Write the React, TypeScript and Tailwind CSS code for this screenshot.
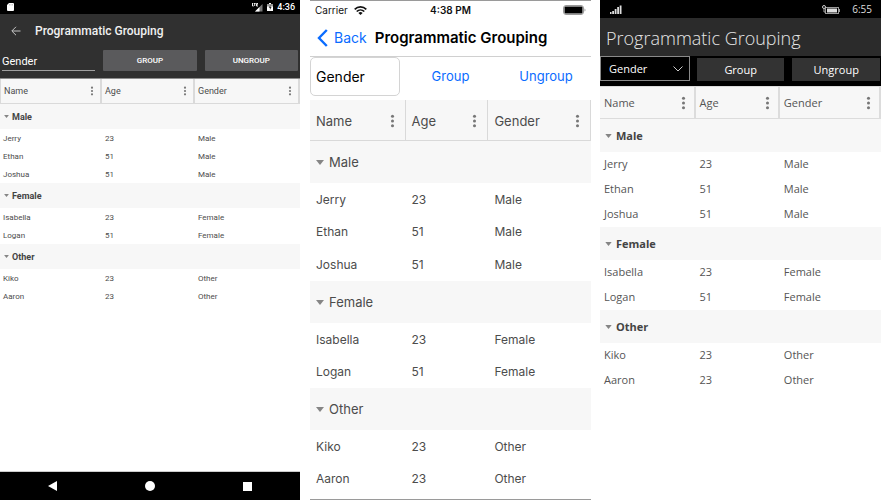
import React from "react";

type Person = { name: string; age: number };
type Group = { label: string; people: Person[] };

const groups: Group[] = [
  {
    label: "Male",
    people: [
      { name: "Jerry", age: 23 },
      { name: "Ethan", age: 51 },
      { name: "Joshua", age: 51 },
    ],
  },
  {
    label: "Female",
    people: [
      { name: "Isabella", age: 23 },
      { name: "Logan", age: 51 },
    ],
  },
  {
    label: "Other",
    people: [
      { name: "Kiko", age: 23 },
      { name: "Aaron", age: 23 },
    ],
  },
];

const columns = ["Name", "Age", "Gender"];

type GridTheme = {
  table: string;
  widths: [string, string, string];
  headRow: string;
  headCell: string;
  dots: string;
  groupRow: string;
  groupButton: string;
  arrow: string;
  row: string;
  cell: string;
};

function Dots({ className }: { className: string }) {
  return (
    <svg viewBox="0 0 4 12" className={className} fill="currentColor" aria-hidden="true">
      <circle cx="2" cy="2" r="1.3" />
      <circle cx="2" cy="6" r="1.3" />
      <circle cx="2" cy="10" r="1.3" />
    </svg>
  );
}

function DataGrid({ theme }: { theme: GridTheme }) {
  return (
    <table className={`w-full table-fixed border-separate border-spacing-0 text-left ${theme.table}`}>
      <colgroup>
        {theme.widths.map((w, i) => (
          <col key={i} className={w} />
        ))}
      </colgroup>
      <thead>
        <tr className={theme.headRow}>
          {columns.map((c) => (
            <th key={c} scope="col" className={`p-0 font-normal ${theme.headCell}`}>
              <div className="flex items-center justify-between">
                <span>{c}</span>
                <button type="button" aria-label={`${c} options`} className="flex text-[#777]">
                  <Dots className={theme.dots} />
                </button>
              </div>
            </th>
          ))}
        </tr>
      </thead>
      {groups.map((g) => (
        <tbody key={g.label}>
          <tr className={`bg-[#f7f7f7] ${theme.groupRow}`}>
            <th colSpan={3} scope="rowgroup" className="p-0">
              <button type="button" className={`flex items-center ${theme.groupButton}`}>
                <svg viewBox="0 0 8 5" className={theme.arrow} fill="#858585" aria-hidden="true">
                  <path d="M0 0h8L4 5z" />
                </svg>
                {g.label}
              </button>
            </th>
          </tr>
          {g.people.map((p) => (
            <tr key={p.name} className={theme.row}>
              <td className={theme.cell}>{p.name}</td>
              <td className={theme.cell}>{p.age}</td>
              <td className={theme.cell}>{g.label}</td>
            </tr>
          ))}
        </tbody>
      ))}
    </table>
  );
}

const androidGrid: GridTheme = {
  table: "border-t border-[#8c8c8c] text-[8px] leading-[10px] text-[#4c4c4c]",
  widths: ["w-[34%]", "w-[31%]", "w-[35%]"],
  headRow: "h-[25px] bg-[#f7f7f7]",
  headCell: "border-b border-r-2 border-[#dadada] pl-[3px] pr-1.5 text-[9px] first:border-l",
  dots: "h-[10px] w-1",
  groupRow: "h-[25px]",
  groupButton: "gap-[3px] pl-1 text-[9px] font-bold text-[#444]",
  arrow: "h-[3px] w-[5px]",
  row: "h-[18px]",
  cell: "pb-0 pt-px pl-[3px] pr-0",
};

const iosGrid: GridTheme = {
  table: "text-[13px] leading-4 text-[#4c4c4c]",
  widths: ["w-[34%]", "w-[29.5%]", "w-[36.5%]"],
  headRow: "h-[41px] bg-[#f7f7f7]",
  headCell: "border-b border-r border-[#d9d9d9] pl-1.5 pr-2.5 pt-px",
  dots: "h-[14px] w-[5px]",
  groupRow: "h-[42px]",
  groupButton: "gap-[5px] pl-1.5 font-normal",
  arrow: "h-[5px] w-2",
  row: "even:h-[33px] odd:h-8",
  cell: "py-0 pl-1.5 pr-0 text-[12px]",
};

const windowsGrid: GridTheme = {
  table: "text-[11px] leading-[14px] text-[#555]",
  widths: ["w-[34%]", "w-[30%]", "w-[36%]"],
  headRow: "h-[33px] bg-[#f7f7f7]",
  headCell: "border-y border-r-2 border-[#dcdcdc] pl-1 pr-2",
  dots: "h-[14px] w-[5px]",
  groupRow: "h-[33px]",
  groupButton: "gap-1 pl-[5px] font-bold text-[#444]",
  arrow: "h-[4px] w-[7px]",
  row: "h-[25px]",
  cell: "pb-px pt-0 pl-1 pr-0",
};

function AndroidScreen() {
  return (
    <section className="flex flex-col bg-white font-['Roboto',sans-serif]">
      <div className="flex h-3.5 items-center justify-end gap-1 bg-black pl-[7px] pr-[5px] text-[9px] font-medium leading-3 text-white">
        <svg viewBox="0 0 7 8" className="mr-auto h-2 w-[7px]" aria-hidden="true">
          <path d="M2 0h4a1 1 0 0 1 1 1v6a1 1 0 0 1-1 1H1a1 1 0 0 1-1-1V2z" fill="#fff" />
          <path d="M2.5 1v1.500M4 1v1.500M5.500 1v1.500" stroke="#999" strokeWidth=".5" />
        </svg>
        <svg viewBox="0 0 11 9" className="h-[9px] w-[11px]" aria-hidden="true">
          <path d="M10.500 1v7.500H3z" fill="#777" />
          <path d="M7.500 4v4.500H3z" fill="#fff" />
          <path d="M.5 0v3h1.200M1.700.5h2M2.700.5v2.500M6 .5H4.500v2.500H6M4.500 1.700h1.300" stroke="#fff" strokeWidth=".9" fill="none" />
        </svg>
        <svg viewBox="0 0 6 8" className="h-2 w-1.5" aria-hidden="true">
          <path d="M2 0h2v1h2v7H0V1h2z" fill="#fff" />
          <path d="M0 1h6v2.500H0z" fill="#999" />
          <path d="M3.400 2 1.700 4.800h1.200V7l1.600-2.900H3.400z" fill="#222" />
        </svg>
        <span>4:36</span>
      </div>
      <header className="flex h-[34px] items-center gap-3.5 bg-[#303030] pl-[11px] text-[#f0f0f0]">
        <button type="button" aria-label="Back" className="flex">
          <svg viewBox="0 0 10 10" className="size-2.5" fill="none" stroke="#c4c4c4" aria-hidden="true">
            <path d="M9.500 5H1M5 .8.800 5 5 9.200" />
          </svg>
        </button>
        <h1 className="text-[12px] font-medium leading-4">Programmatic Grouping</h1>
      </header>
      <div className="flex h-[30px] gap-2 bg-[#303030] px-0.5 pt-0.5 text-white">
        <select
          aria-label="Column"
          className="mb-[7px] min-w-0 flex-1 appearance-none border-b border-[#a0a0a0] bg-transparent pt-1 text-[11px] leading-[14px] outline-none"
        >
          <option>Gender</option>
        </select>
        <button type="button" className="mb-[7px] flex-1 rounded-[1px] bg-[#5a5a5c] pt-px text-[8px] font-medium">
          GROUP
        </button>
        <button type="button" className="mb-[7px] flex-1 rounded-[1px] bg-[#5a5a5c] pt-px text-[8px] font-medium">
          UNGROUP
        </button>
      </div>
      <DataGrid theme={androidGrid} />
      <nav className="mt-auto flex h-[29px] items-center justify-between border-t border-[#ccc] bg-black pl-12 pr-12">
        <button type="button" aria-label="Back" className="flex">
          <svg viewBox="0 0 9 10" className="h-2.5 w-[9px]" fill="#fff" aria-hidden="true">
            <path d="M9 0v10L0 5z" />
          </svg>
        </button>
        <button type="button" aria-label="Home" className="size-2.5 rounded-full bg-white" />
        <button type="button" aria-label="Recents" className="size-[9px] bg-white" />
      </nav>
    </section>
  );
}

function IosScreen() {
  return (
    <section className="flex flex-col border-y border-[#9a9a9a] bg-white font-['Inter',sans-serif]">
      <div className="grid h-[18px] grid-cols-[1fr_auto_1fr] items-center px-[5px] text-[10px] leading-3 text-[#111]">
        <span className="flex items-center gap-1.5">
          Carrier
          <svg viewBox="0 0 13 9" className="h-[9px] w-[13px]" fill="none" stroke="#111" strokeWidth="1.700" aria-hidden="true">
            <path d="M.7 3.300a8.300 8.300 0 0 1 11.600 0M2.700 5.500a5.500 5.500 0 0 1 7.600 0" />
            <path d="M4.400 6.900a3.100 3.100 0 0 1 4.200 0L6.500 9z" fill="#111" stroke="none" />
          </svg>
        </span>
        <span className="font-semibold">4:38 PM</span>
        <svg viewBox="0 0 23 10" className="h-2.5 w-[23px] justify-self-end" aria-hidden="true">
          <rect x=".5" y=".5" width="20" height="9" rx="2.500" fill="none" stroke="#999" />
          <rect x="1.500" y="1.500" width="18" height="7" rx="1" fill="#000" />
          <path d="M21.500 3.500c1.300.3 1.300 2.700 0 3z" fill="#999" />
        </svg>
      </div>
      <header className="flex h-[38px] items-center gap-2 border-b border-[#d0d0d0] pl-[7px]">
        <button type="button" className="flex items-center gap-1.5 text-[14px] leading-5 text-[#0a6cff]">
          <svg viewBox="0 0 11 18" className="h-[18px] w-[11px]" fill="none" stroke="#0a6cff" strokeWidth="2.400" aria-hidden="true">
            <path d="M9.800 1 2 9l7.800 8" />
          </svg>
          Back
        </button>
        <h1 className="text-[15px] font-semibold leading-5 text-black">Programmatic Grouping</h1>
      </header>
      <div className="flex h-[43px] pb-1 text-[13px] text-[#0a6cff]">
        <input
          aria-label="Column"
          defaultValue="Gender"
          className="w-[32%] rounded-[5px] border border-[#d4d4d4] px-[5px] text-[14px] leading-5 text-black outline-none"
        />
        <button type="button" className="flex-1">
          Group
        </button>
        <button type="button" className="w-[32%]">
          Ungroup
        </button>
      </div>
      <DataGrid theme={iosGrid} />
    </section>
  );
}

function WindowsScreen() {
  return (
    <section className="flex flex-col bg-white font-['Open_Sans',sans-serif]">
      <div className="flex h-[18px] items-center bg-black pl-2.5 pr-[9px] text-[10px] leading-3 text-[#ddd]">
        <svg viewBox="0 0 12 9" className="mr-auto h-[9px] w-3" fill="#ddd" aria-hidden="true">
          <path d="M0 7h1.500v2H0zM2.200 6H4v3H2.200zM4.700 4h1.800v5H4.700zM7.200 2H9v7H7.200zM9.700.5h1.800V9H9.700z" />
        </svg>
        <svg viewBox="0 0 18 9" className="mr-3 h-[9px] w-[18px]" aria-hidden="true">
          <rect x="3.500" y="2.500" width="13" height="6" fill="none" stroke="#999" />
          <path d="M5 3.500h10v4H5z" fill="#ddd" />
          <path d="M17 4h1v3h-1z" fill="#999" />
          <circle cx="2" cy="2" r="1.500" fill="#000" stroke="#ccc" />
          <path d="M2 3.500V7h1.500" fill="none" stroke="#aaa" />
        </svg>
        <span>6:55</span>
      </div>
      <header className="flex h-[38px] items-center bg-[#2b2b2b] pl-1.5 pt-0.5">
        <h1 className="text-[18px] font-light leading-6 text-[#e6e6e6]">Programmatic Grouping</h1>
      </header>
      <div className="flex h-[30px] gap-[7px] bg-black pb-[5px] text-[11px] leading-4 text-white">
        <div className="grid w-[32%] items-center">
          <select
            aria-label="Column"
            className="col-start-1 row-start-1 h-full appearance-none border border-[#8a8a8a] bg-black px-2 outline-none"
          >
            <option>Gender</option>
          </select>
          <svg
            viewBox="0 0 10 6"
            className="pointer-events-none col-start-1 row-start-1 mr-[7px] h-1.5 w-2.5 justify-self-end"
            fill="none"
            stroke="#ccc"
            aria-hidden="true"
          >
            <path d="m.5.500 4.500 4.500L9.500.500" />
          </svg>
        </div>
        <div className="flex flex-1 gap-2 pr-px pt-0.5">
          <button type="button" className="flex-1 bg-[#333]">
            Group
          </button>
          <button type="button" className="flex-1 bg-[#333]">
            Ungroup
          </button>
        </div>
      </div>
      <DataGrid theme={windowsGrid} />
    </section>
  );
}

export default function App() {
  return (
    <main className="grid min-h-screen grid-cols-[301fr_281fr_281fr] gap-x-[9px] bg-white">
      <div className="grid pr-px">
        <AndroidScreen />
      </div>
      <IosScreen />
      <WindowsScreen />
    </main>
  );
}
